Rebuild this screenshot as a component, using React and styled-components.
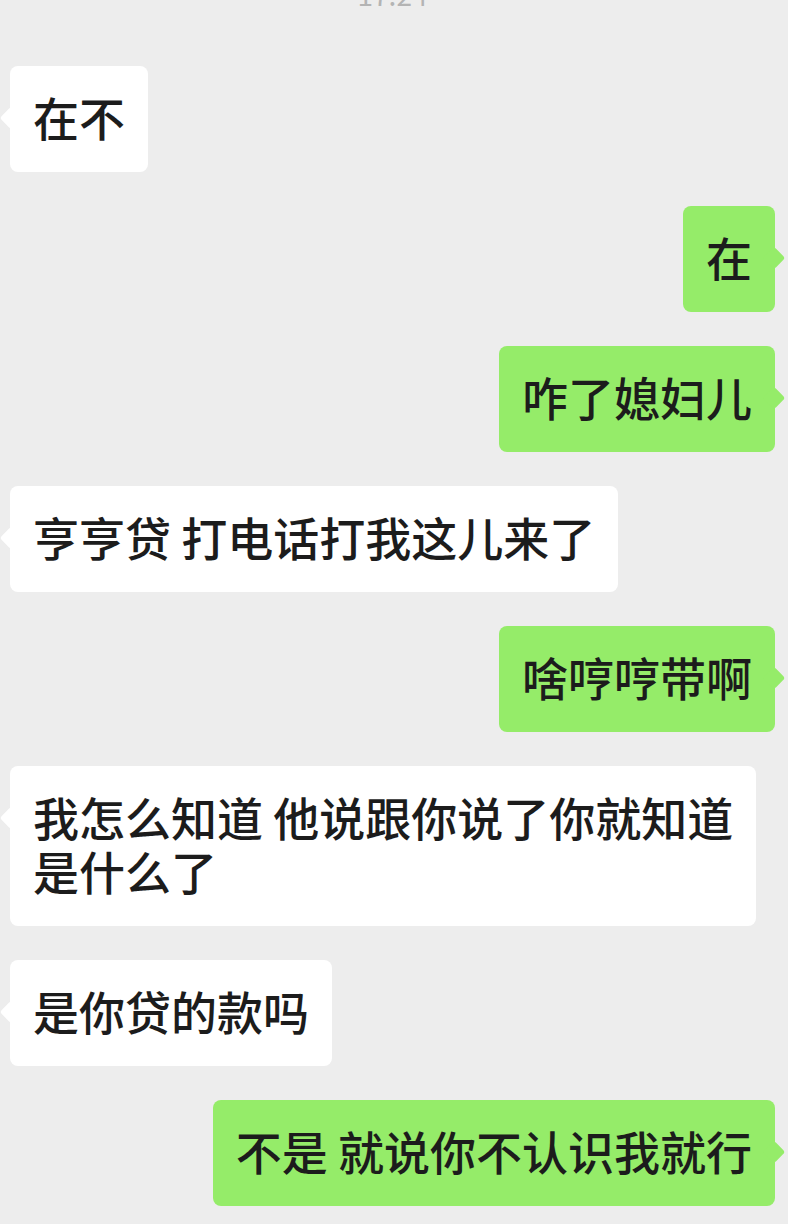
import React from 'react';
import styled, { createGlobalStyle, css } from 'styled-components';

const GlobalStyle = createGlobalStyle`
  html, body {
    margin: 0;
    padding: 0;
    background: #ededed;
  }
  body {
    font-family: "Noto Sans CJK SC", "Noto Sans", sans-serif;
    overflow: hidden;
  }
`;

const Screen = styled.div`
  min-height: 1224px;
  background: #ededed;
  padding: 0 13px 0 10px;
  box-sizing: border-box;
`;

const Time = styled.div`
  height: 28px;
  margin-top: -20px;
  margin-bottom: 58px;
  text-align: center;
  font-size: 28px;
  line-height: 28px;
  color: #b4b4b4;
`;

const Thread = styled.div`
  display: flex;
  flex-direction: column;
  gap: 34px;
`;

const Row = styled.div`
  display: flex;
  justify-content: ${(props) => (props.mine ? 'flex-end' : 'flex-start')};
`;

const Bubble = styled.div`
  position: relative;
  padding: 23px 23px 29px;
  border-radius: 8px;
  font-size: 46px;
  font-weight: 500;
  line-height: 54px;
  color: #1c1c1c;
  white-space: pre-wrap;
  background: ${(props) => (props.mine ? '#95ec69' : '#ffffff')};

  &::before {
    content: '';
    position: absolute;
    top: 44px;
    width: 16px;
    height: 16px;
    border-radius: 3px;
    transform: rotate(45deg);
    background: inherit;
    ${(props) =>
      props.mine
        ? css`right: -7px;`
        : css`left: -7px;`}
  }
`;

const messages = [
  { mine: false, text: '在不' },
  { mine: true, text: '在' },
  { mine: true, text: '咋了媳妇儿' },
  { mine: false, text: '亨亨贷 打电话打我这儿来了' },
  { mine: true, text: '啥哼哼带啊' },
  { mine: false, text: '我怎么知道 他说跟你说了你就知道\n是什么了' },
  { mine: false, text: '是你贷的款吗' },
  { mine: true, text: '不是 就说你不认识我就行' },
];

export default function App() {
  return (
    <Screen>
      <GlobalStyle />
      <Time>17:24</Time>
      <Thread>
        {messages.map((m, i) => (
          <Row key={i} mine={m.mine}>
            <Bubble mine={m.mine}>{m.text}</Bubble>
          </Row>
        ))}
      </Thread>
    </Screen>
  );
}
